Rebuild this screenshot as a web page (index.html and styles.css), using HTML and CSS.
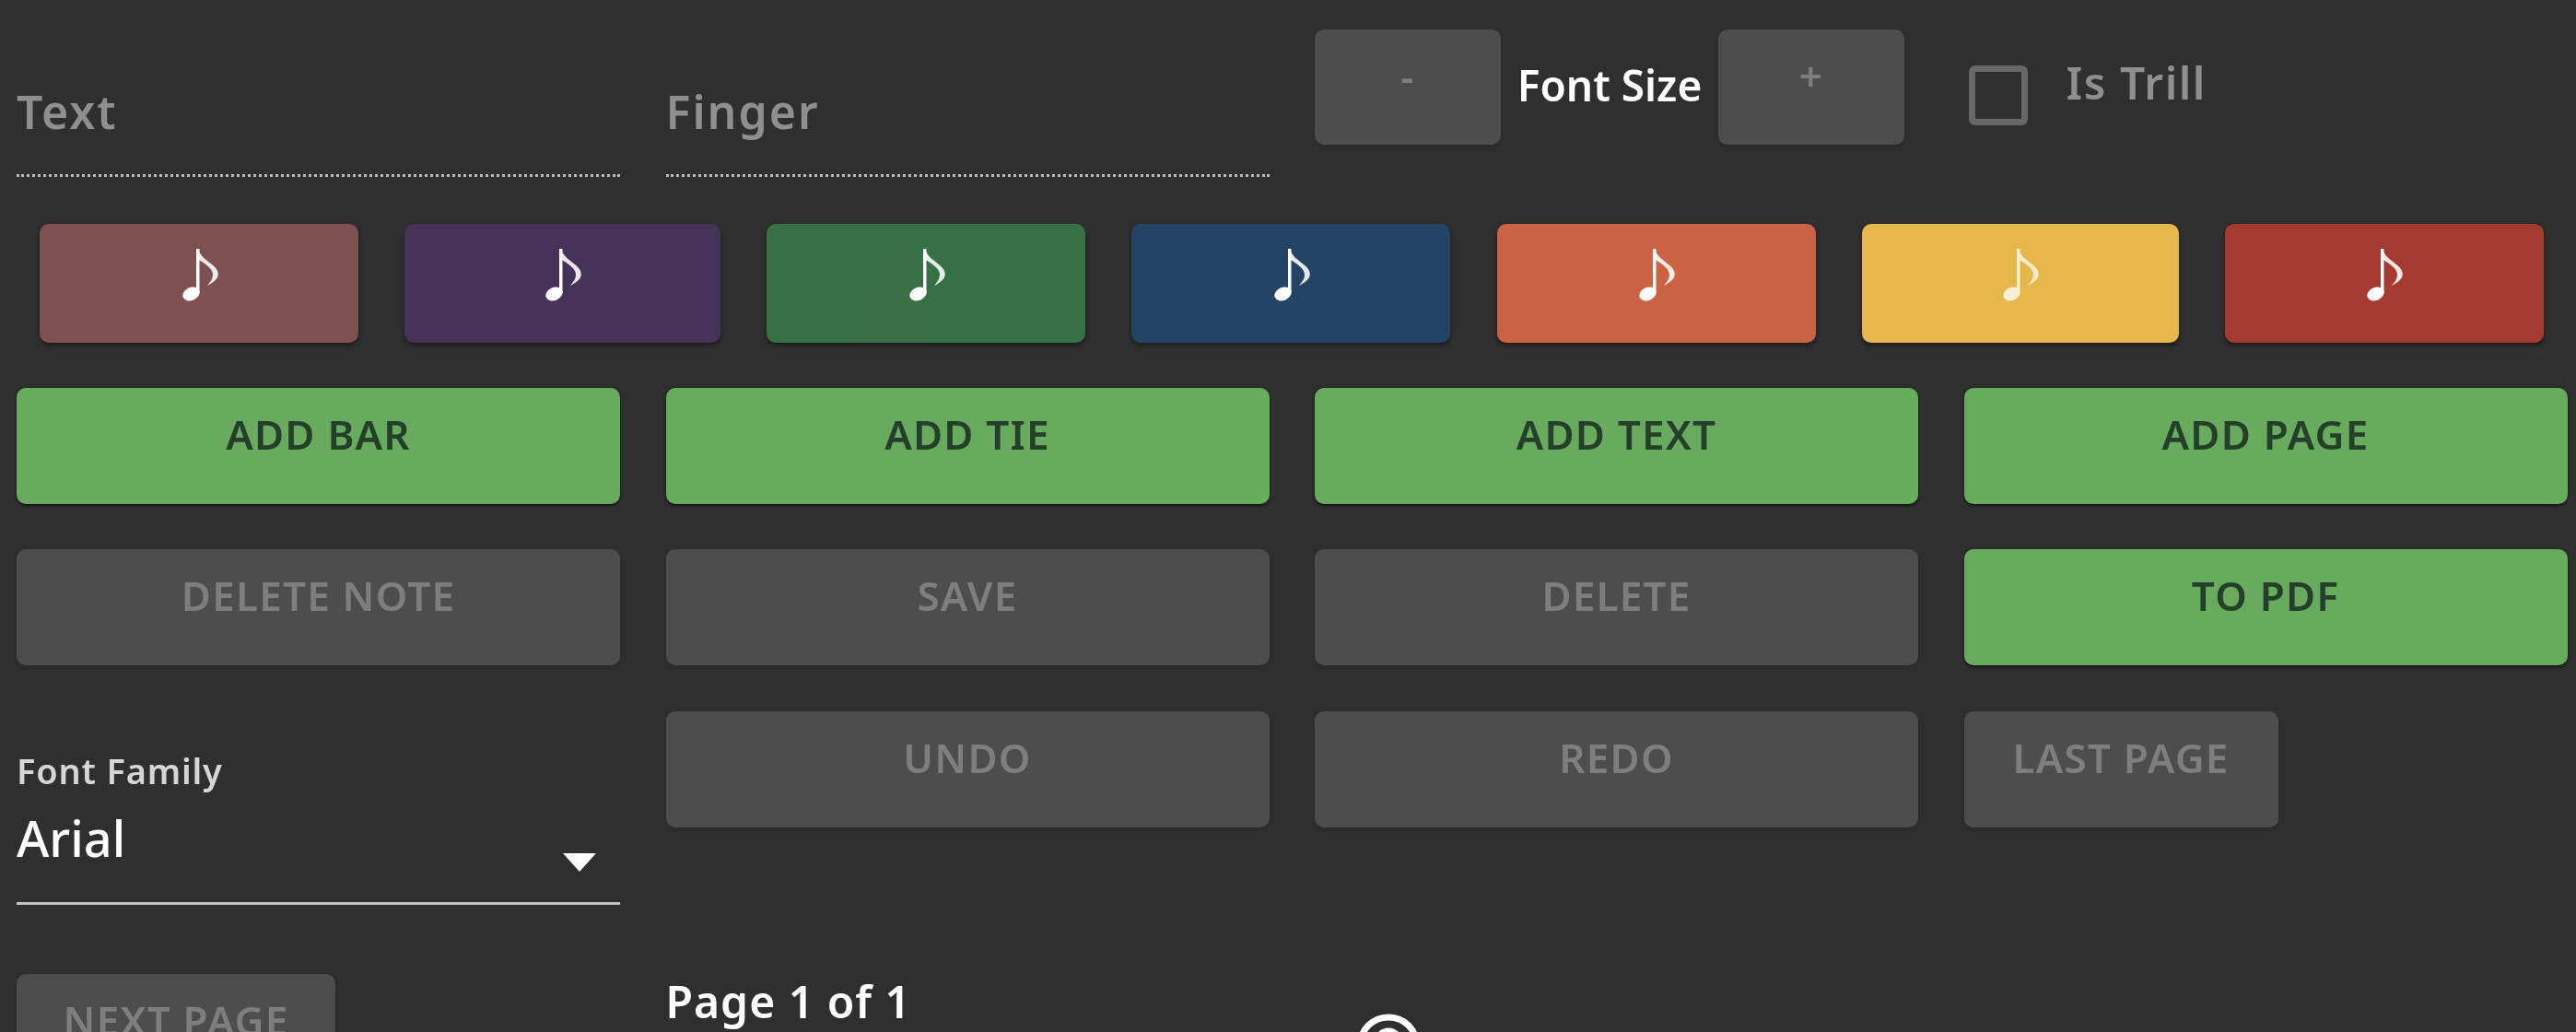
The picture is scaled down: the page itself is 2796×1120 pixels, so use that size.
FILE: index.html
```html
<!DOCTYPE html>
<html lang="en">
<head>
<meta charset="utf-8">
<title>Editor controls</title>
<link rel="stylesheet" href="styles.css">
</head>
<body>
<main class="panel">
  <section class="grid top-row">
    <div class="text-field"><span class="placeholder">Text</span></div>
    <div class="text-field"><span class="placeholder">Finger</span></div>
    <div class="font-size">
      <button class="btn btn-off btn-step">-</button>
      <span class="font-size-label">Font Size</span>
      <button class="btn btn-off btn-step">+</button>
    </div>
    <label class="trill"><span class="checkbox"></span><span class="trill-label">Is Trill</span></label>
  </section>

  <section class="swatches">
    <button class="swatch swatch-rose"><svg class="note" viewBox="0 0 40 57"><use href="#note"/></svg></button>
    <button class="swatch swatch-purple"><svg class="note" viewBox="0 0 40 57"><use href="#note"/></svg></button>
    <button class="swatch swatch-green"><svg class="note" viewBox="0 0 40 57"><use href="#note"/></svg></button>
    <button class="swatch swatch-blue"><svg class="note" viewBox="0 0 40 57"><use href="#note"/></svg></button>
    <button class="swatch swatch-orange"><svg class="note" viewBox="0 0 40 57"><use href="#note"/></svg></button>
    <button class="swatch swatch-yellow"><svg class="note" viewBox="0 0 40 57"><use href="#note"/></svg></button>
    <button class="swatch swatch-red"><svg class="note" viewBox="0 0 40 57"><use href="#note"/></svg></button>
  </section>

  <section class="grid button-row">
    <button class="btn btn-on">ADD BAR</button>
    <button class="btn btn-on">ADD TIE</button>
    <button class="btn btn-on">ADD TEXT</button>
    <button class="btn btn-on">ADD PAGE</button>
  </section>

  <section class="grid button-row">
    <button class="btn btn-off">DELETE NOTE</button>
    <button class="btn btn-off">SAVE</button>
    <button class="btn btn-off">DELETE</button>
    <button class="btn btn-on">TO PDF</button>
  </section>

  <section class="grid select-row">
    <div class="select-field">
      <span class="select-label">Font Family</span>
      <div class="select-value"><span>Arial</span><span class="select-arrow"></span></div>
    </div>
    <button class="btn btn-off">UNDO</button>
    <button class="btn btn-off">REDO</button>
    <button class="btn btn-off btn-page">LAST PAGE</button>
  </section>

  <section class="grid pager-row">
    <button class="btn btn-off btn-next">NEXT PAGE</button>
    <span class="page-count">Page 1 of 1</span>
    <svg class="round-icon" viewBox="0 0 76 76"><circle cx="38" cy="38" r="31" fill="none" stroke="#fff" stroke-width="7"/><path d="M26 34a12 12 0 0 1 24 0" fill="none" stroke="#fff" stroke-width="7"/></svg>
  </section>
</main>

<svg class="sprite" width="0" height="0">
  <symbol id="note" viewBox="0 0 40 57">
    <ellipse cx="9.500" cy="49" rx="9.500" ry="7" transform="rotate(-24 9.500 49)" fill="#fff"/>
    <path d="M15 0H18.500V48H15Z" fill="#fff"/>
    <path d="M17 0C19 8 26 12 32 17C38 22 40 26 38 31C36 35 31 38 27 40C30 36 33 33 33 28C33 22 26 17 18 12Z" fill="#fff" fill-opacity=".88"/>
  </symbol>
</svg>
</body>
</html>
```
FILE: styles.css
```css
* {
  box-sizing: border-box;
}

html,
body {
  margin: 0;
  height: 1120px;
  overflow: hidden;
  background: #2f2f2f;
}

body {
  font-family: "Noto Sans", "Open Sans", sans-serif;
  color: #fff;
}

.panel {
  padding: 32px 8px 0 18px;
  filter: blur(.7px);
}

.grid {
  display: grid;
  grid-template-columns: repeat(4, 655px);
  column-gap: 49.500px;
}

.top-row {
  height: 125px;
}

.text-field {
  height: 160px;
  border-bottom: 3px dotted #bdbdbd;
  padding-top: 55px;
}

.placeholder {
  font-size: 50px;
  line-height: 68px;
  font-weight: 600;
  letter-spacing: 2px;
  color: #8f8f8f;
}

.font-size {
  display: flex;
  align-items: flex-start;
}

.btn {
  display: block;
  width: 100%;
  height: 126px;
  border: 0;
  border-radius: 10px;
  padding: 0 0 26px;
  align-self: start;
  font-family: inherit;
  font-size: 44px;
  line-height: 58px;
  font-weight: 600;
  letter-spacing: 1.200px;
  text-align: center;
}

.btn-on {
  background: #69ab5e;
  color: #24402a;
  box-shadow: 0 2px 3px rgba(0, 0, 0, .55), 0 -1px 2px rgba(20, 50, 20, .4);
}

.btn-off {
  background: #4d4d4d;
  color: #7e7e7e;
  box-shadow: 0 3px 6px rgba(0, 0, 0, .1);
}

.btn-step {
  width: 202px;
  height: 125px;
  flex: none;
}

.font-size-label {
  width: 236px;
  text-align: center;
  font-size: 46px;
  line-height: 60px;
  padding-top: 30px;
  font-weight: 600;
  white-space: nowrap;
}

.trill {
  display: flex;
  align-items: flex-start;
  padding-left: 5px;
}

.checkbox {
  width: 64px;
  height: 65px;
  margin-top: 39px;
  border: 7px solid #686868;
  border-radius: 7px;
}

.trill-label {
  margin-left: 42px;
  margin-top: 28px;
  font-size: 48px;
  line-height: 60px;
  font-weight: 600;
  letter-spacing: 1.500px;
  color: #8f8f8f;
}

.swatches {
  display: flex;
  justify-content: space-around;
  margin-top: 86px;
  height: 129px;
  padding-right: 2px;
}

.swatch {
  position: relative;
  display: flex;
  justify-content: center;
  width: 346px;
  height: 129px;
  padding: 27px 0 0 3px;
  border: 0;
  border-radius: 10px;
  box-shadow: 0 3px 5px rgba(0, 0, 0, .4);
}

.swatch-rose { background: #7f5050; }
.swatch-purple { background: #443258; width: 343px; }
.swatch-green { background: #377045; }
.swatch-blue { background: #234464; }
.swatch-orange { background: #cb6243; }
.swatch-yellow { background: #e6b84c; width: 344px; }
.swatch-red { background: #a43a30; }

.swatch-green::before {
  content: "";
  position: absolute;
  left: 96px;
  top: 21px;
  width: 80px;
  height: 108px;
  background: #3a6f47;
  clip-path: polygon(50% 0, 78% 0, 100% 100%, 0 100%);
}

.swatch-yellow .note {
  opacity: .78;
}

.note {
  position: relative;
  width: 40px;
  height: 57px;
}

.sprite {
  position: absolute;
}

.button-row {
  margin-top: 49px;
}

.select-row {
  margin-top: 50px;
  height: 235px;
}

.select-field {
  height: 210px;
  border-bottom: 3px solid #c4c4c4;
  padding-top: 40px;
}

.select-label {
  display: block;
  font-size: 38px;
  line-height: 48px;
  font-weight: 600;
  letter-spacing: .8px;
  color: #d6d6d6;
}

.select-value {
  display: flex;
  justify-content: space-between;
  margin-top: 15px;
  padding-right: 26px;
  font-size: 54px;
  line-height: 68px;
  font-weight: 500;
}

.select-arrow {
  width: 0;
  height: 0;
  margin-top: 51px;
  border-left: 18px solid transparent;
  border-right: 18px solid transparent;
  border-top: 20px solid #fff;
}

.btn-page {
  width: 341px;
}

.btn-next {
  width: 346px;
}

.pager-row {
  margin-top: 50px;
}

.page-count {
  font-size: 48px;
  line-height: 60px;
  font-weight: 600;
  letter-spacing: 1px;
}

.round-icon {
  width: 76px;
  height: 76px;
  margin: 40px 0 0 42px;
}
```
